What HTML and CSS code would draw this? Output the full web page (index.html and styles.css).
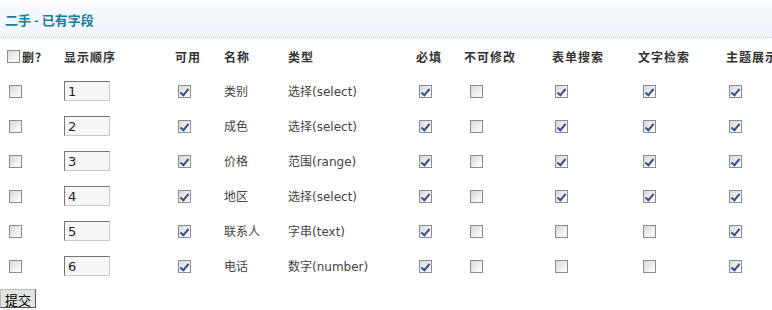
FILE: index.html
```html
<!DOCTYPE html>
<html lang="zh-CN">
<head>
    <meta charset="UTF-8">
    <title>二手 - 已有字段</title>
    <link rel="stylesheet" href="styles.css">
</head>
<body>
    <div class="title-bar">
        <h2>二手 - 已有字段</h2>
    </div>

    <form class="field-form">
        <table class="fields">
            <colgroup>
                <col class="c-del"><col class="c-order"><col class="c-use"><col class="c-name"><col class="c-type">
                <col class="c-req"><col class="c-lock"><col class="c-search"><col class="c-text"><col class="c-show">
            </colgroup>
            <thead>
                <tr>
                    <th><input type="checkbox" class="chk chk-all">删?</th>
                    <th>显示顺序</th>
                    <th>可用</th>
                    <th>名称</th>
                    <th>类型</th>
                    <th>必填</th>
                    <th>不可修改</th>
                    <th>表单搜索</th>
                    <th>文字检索</th>
                    <th>主题展示</th>
                </tr>
            </thead>
            <tbody>
                <tr>
                    <td><input type="checkbox" class="chk chk-del"></td>
                    <td><input type="text" class="order" value="1"></td>
                    <td><input type="checkbox" class="chk" checked></td>
                    <td>类别</td>
                    <td>选择(select)</td>
                    <td><input type="checkbox" class="chk" checked></td>
                    <td><input type="checkbox" class="chk chk-lock"></td>
                    <td><input type="checkbox" class="chk" checked></td>
                    <td><input type="checkbox" class="chk chk-text" checked></td>
                    <td><input type="checkbox" class="chk" checked></td>
                </tr>
                <tr>
                    <td><input type="checkbox" class="chk chk-del"></td>
                    <td><input type="text" class="order" value="2"></td>
                    <td><input type="checkbox" class="chk" checked></td>
                    <td>成色</td>
                    <td>选择(select)</td>
                    <td><input type="checkbox" class="chk" checked></td>
                    <td><input type="checkbox" class="chk chk-lock"></td>
                    <td><input type="checkbox" class="chk" checked></td>
                    <td><input type="checkbox" class="chk chk-text" checked></td>
                    <td><input type="checkbox" class="chk" checked></td>
                </tr>
                <tr>
                    <td><input type="checkbox" class="chk chk-del"></td>
                    <td><input type="text" class="order" value="3"></td>
                    <td><input type="checkbox" class="chk" checked></td>
                    <td>价格</td>
                    <td>范围(range)</td>
                    <td><input type="checkbox" class="chk" checked></td>
                    <td><input type="checkbox" class="chk chk-lock"></td>
                    <td><input type="checkbox" class="chk" checked></td>
                    <td><input type="checkbox" class="chk chk-text" checked></td>
                    <td><input type="checkbox" class="chk" checked></td>
                </tr>
                <tr>
                    <td><input type="checkbox" class="chk chk-del"></td>
                    <td><input type="text" class="order" value="4"></td>
                    <td><input type="checkbox" class="chk" checked></td>
                    <td>地区</td>
                    <td>选择(select)</td>
                    <td><input type="checkbox" class="chk" checked></td>
                    <td><input type="checkbox" class="chk chk-lock"></td>
                    <td><input type="checkbox" class="chk" checked></td>
                    <td><input type="checkbox" class="chk chk-text" checked></td>
                    <td><input type="checkbox" class="chk" checked></td>
                </tr>
                <tr>
                    <td><input type="checkbox" class="chk chk-del"></td>
                    <td><input type="text" class="order" value="5"></td>
                    <td><input type="checkbox" class="chk" checked></td>
                    <td>联系人</td>
                    <td>字串(text)</td>
                    <td><input type="checkbox" class="chk" checked></td>
                    <td><input type="checkbox" class="chk chk-lock"></td>
                    <td><input type="checkbox" class="chk"></td>
                    <td><input type="checkbox" class="chk chk-text"></td>
                    <td><input type="checkbox" class="chk" checked></td>
                </tr>
                <tr>
                    <td><input type="checkbox" class="chk chk-del"></td>
                    <td><input type="text" class="order" value="6"></td>
                    <td><input type="checkbox" class="chk" checked></td>
                    <td>电话</td>
                    <td>数字(number)</td>
                    <td><input type="checkbox" class="chk" checked></td>
                    <td><input type="checkbox" class="chk chk-lock"></td>
                    <td><input type="checkbox" class="chk"></td>
                    <td><input type="checkbox" class="chk chk-text"></td>
                    <td><input type="checkbox" class="chk" checked></td>
                </tr>
            </tbody>
        </table>
        <button type="button" class="submit">提交</button>
    </form>
</body>
</html>
```

FILE: styles.css
```css
* {
    margin: 0;
    padding: 0;
    box-sizing: border-box;
}

body {
    font-family: "DejaVu Sans", "Noto Sans CJK SC", sans-serif;
    font-size: 12px;
    color: #444;
    background: #fff;
    overflow: hidden;
}

.title-bar {
    height: 38px;
    background: linear-gradient(#fafcfe, #eef4fb);
    border-bottom: 1px dotted #c9cdd2;
    display: flex;
    align-items: center;
    padding: 1px 0 0 5px;
}

.title-bar h2 {
    font-size: 13px;
    font-weight: bold;
    color: #1e7b9b;
    font-family: "Noto Sans CJK SC", sans-serif;
}

.fields {
    margin-left: 6px;
    border-collapse: collapse;
    table-layout: fixed;
    width: 780px;
}

.c-del { width: 58px; }
.c-order { width: 111px; }
.c-use { width: 49px; }
.c-name { width: 64px; }
.c-type { width: 128px; }
.c-req { width: 48px; }
.c-lock { width: 88px; }
.c-search { width: 86px; }
.c-text { width: 88px; }
.c-show { width: 60px; }

.fields th {
    height: 35px;
    padding-top: 2px;
    text-align: left;
    font-weight: bold;
    color: #333;
    letter-spacing: 1px;
    white-space: nowrap;
    font-family: "Noto Sans CJK SC", sans-serif;
}

.fields th:first-child {
    display: flex;
    align-items: center;
    height: 35px;
}

.fields td {
    height: 35px;
    text-align: left;
    white-space: nowrap;
    vertical-align: middle;
}

.chk {
    appearance: none;
    -webkit-appearance: none;
    display: inline-block;
    position: relative;
    width: 13px;
    height: 13px;
    margin: 0 0 0 3px;
    vertical-align: middle;
    border: 1px solid #8c8c8c;
    background: linear-gradient(135deg, #d8d8d8, #f4f4f4 70%, #fff);
}

.chk:checked::after {
    content: "";
    position: absolute;
    left: 3px;
    top: 1px;
    width: 3px;
    height: 7px;
    border-right: 2px solid #3b4f8c;
    border-bottom: 2px solid #3b4f8c;
    transform: rotate(40deg);
}

.chk-all {
    margin: 0 2px 0 1px;
}

.chk-lock {
    margin-left: 6px;
}

.chk-text {
    margin-left: 5px;
}

.order {
    width: 46px;
    height: 20px;
    padding-left: 3px;
    margin-top: 1px;
    font-family: "DejaVu Sans", sans-serif;
    font-size: 13px;
    color: #222;
    background: #f7f7f7;
    border: 1px solid;
    border-color: #777 #c8c8c8 #c8c8c8 #777;
    vertical-align: middle;
}

.submit {
    display: block;
    margin-top: 6px;
    padding: 0 4px;
    height: 19px;
    font-family: "Noto Sans CJK SC", sans-serif;
    font-size: 13px;
    color: #000;
    background: #e4e4e4;
    border: 1px solid;
    border-color: #bbb #555 #555 #bbb;
}
```
